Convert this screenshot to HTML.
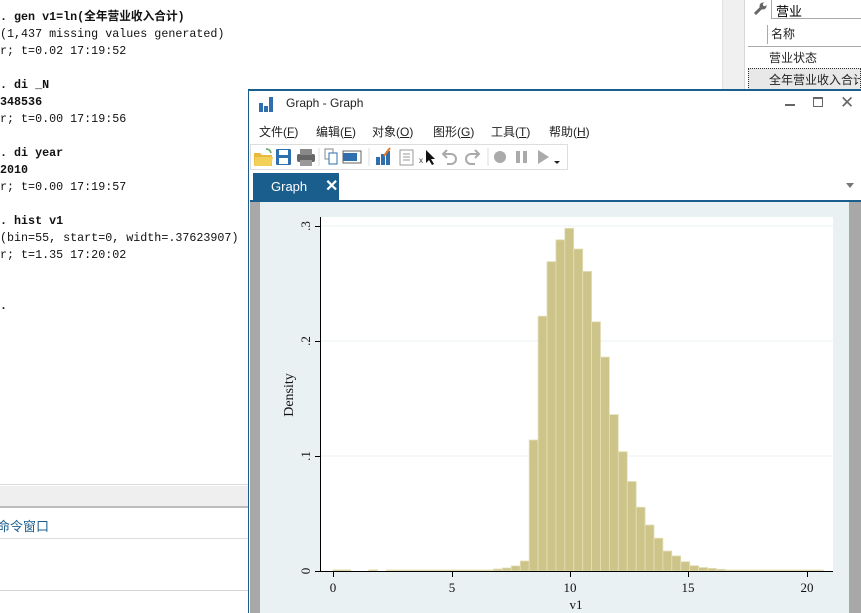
<!DOCTYPE html>
<html><head><meta charset="utf-8"><style>
*{margin:0;padding:0;box-sizing:border-box}
body{width:861px;height:613px;overflow:hidden;background:#fff;position:relative;font-family:"Liberation Sans","Noto Sans CJK SC",sans-serif}
.abs{position:absolute}
#con{left:0;top:9px;font-family:"Liberation Mono","Noto Sans CJK SC",monospace;font-size:11.7px;line-height:17px;font-weight:bold;color:#111;white-space:pre}
#con .n{font-weight:normal}
.ui{font-family:"Liberation Sans","Noto Sans CJK SC",sans-serif;font-size:12px;color:#222}
</style></head><body>
<div id="con" class="abs">. gen v1=ln(全年营业收入合计)
<span class="n">(1,437 missing values generated)
r; t=0.02 17:19:52</span>

. di _N
348536
<span class="n">r; t=0.00 17:19:56</span>

. di year
2010
<span class="n">r; t=0.00 17:19:57</span>

. hist v1
<span class="n">(bin=55, start=0, width=.37623907)
r; t=1.35 17:20:02</span>


.</div>
<!-- bottom left -->
<div class="abs" style="left:0;top:484px;width:248px;height:1px;background:#dcdcdc"></div>
<div class="abs" style="left:0;top:486px;width:248px;height:20px;background:#efefef"></div>
<div class="abs" style="left:0;top:506px;width:248px;height:2px;background:#bdbdbd"></div>
<div class="abs ui" style="left:-3px;top:516px;color:#1a5e8e;font-size:13px">命令窗口</div>
<div class="abs" style="left:0;top:538px;width:248px;height:1px;background:#dcdcdc"></div>
<div class="abs" style="left:0;top:590px;width:248px;height:1px;background:#d4d4d4"></div>
<!-- right strip -->
<div class="abs" style="left:722px;top:0;width:23px;height:90px;background:#f0f0f0;border-left:1px solid #e2e2e2;border-right:1px solid #d8d8d8"></div>
<div class="abs" style="left:745px;top:0;width:116px;height:90px;background:#fff"></div>
<svg class="abs" style="left:752px;top:1px" width="16" height="16" viewBox="0 0 16 16"><path d="M3 13 L10 6" stroke="#666" stroke-width="3"/><circle cx="11" cy="5" r="3.5" fill="#666"/><circle cx="12.5" cy="3.5" r="1.6" fill="#fff"/></svg>
<div class="abs ui" style="left:771px;top:0;width:92px;height:19px;border:1px solid #aaa;border-top:none;padding:1px 4px;font-size:13px;color:#000">营业</div>
<div class="abs" style="left:767px;top:25px;width:1px;height:19px;background:#aaa"></div>
<div class="abs ui" style="left:771px;top:25px;font-size:12px">名称</div>
<div class="abs" style="left:748px;top:46px;width:113px;height:1px;background:#aaa"></div>
<div class="abs ui" style="left:769px;top:49px">营业状态</div>
<div class="abs ui" style="left:748px;top:68px;width:113px;height:22px;background:#e8e8e8;border:1px dotted #333;padding:2px 0 0 20px;white-space:nowrap;overflow:hidden">全年营业收入合计</div>
<!-- graph window -->
<div class="abs" style="left:248px;top:89px;width:613px;height:524px;background:#fff;border-left:1px solid #1a5e8e;border-top:2px solid #1a5e8e"></div>
<svg class="abs" style="left:258px;top:96px" width="16" height="16" viewBox="0 0 16 16"><rect x="1" y="7" width="4" height="9" fill="#2f6fad"/><rect x="6" y="10" width="4" height="6" fill="#2f6fad"/><rect x="11" y="1" width="4" height="15" fill="#2f6fad"/></svg>
<div class="abs ui" style="left:286px;top:96px;font-size:12px;color:#222">Graph - Graph</div>
<div class="abs" style="left:785px;top:104px;width:10px;height:2px;background:#666"></div>
<div class="abs" style="left:813px;top:97px;width:10px;height:10px;border:1px solid #666;border-top-width:2px"></div>
<div class="abs ui" style="left:840px;top:93px;font-size:17px;color:#666">✕</div>
<div class="abs ui" style="left:259px;top:123px;word-spacing:0;white-space:nowrap">
<span style="position:absolute;left:0">文件(<u>F</u>)</span><span style="position:absolute;left:57px">编辑(<u>E</u>)</span><span style="position:absolute;left:113px">对象(<u>O</u>)</span><span style="position:absolute;left:174px">图形(<u>G</u>)</span><span style="position:absolute;left:232px">工具(<u>T</u>)</span><span style="position:absolute;left:290px">帮助(<u>H</u>)</span></div>
<div class="abs" style="left:250px;top:144px;width:318px;height:26px;border:1px solid #ddd"></div>
<svg class="abs" style="left:252px;top:146px" width="316" height="22" viewBox="0 0 316 22">
<path d="M2 7h6l2 2h10v11H2z" fill="#e8b93c"/><path d="M3 11h18l-2 9H2z" fill="#f3d057"/><path d="M14 3 q4 0 5 4" stroke="#5aa85a" stroke-width="1.5" fill="none"/>
<rect x="24" y="3" width="15" height="16" rx="1" fill="#2f6fad"/><rect x="27" y="4" width="9" height="5" fill="#fff"/><rect x="27" y="12" width="9" height="6" fill="#fff"/>
<rect x="45" y="8" width="18" height="8" rx="2" fill="#666"/><rect x="48" y="3" width="12" height="6" fill="#888"/><rect x="48" y="14" width="12" height="6" fill="#999"/>
<line x1="67" y1="2" x2="67" y2="20" stroke="#ddd"/>
<rect x="73" y="3" width="8" height="10" fill="none" stroke="#888"/><rect x="77" y="7" width="8" height="11" fill="#fff" stroke="#2f6fad"/>
<rect x="91" y="7" width="14" height="8" fill="#2f6fad"/><rect x="91" y="5" width="18" height="12" fill="none" stroke="#666"/>
<line x1="117" y1="2" x2="117" y2="20" stroke="#ddd"/>
<rect x="124" y="11" width="4" height="8" fill="#2f6fad"/><rect x="129" y="8" width="4" height="11" fill="#2f6fad"/><rect x="134" y="5" width="4" height="14" fill="#2f6fad"/><path d="M132 10 l6 -8" stroke="#e07a2a" stroke-width="2"/>
<rect x="148" y="4" width="13" height="15" fill="none" stroke="#999"/><path d="M151 8h7M151 11h7M151 14h7" stroke="#999"/>
<text x="167" y="17" font-size="8" fill="#333" font-family="Liberation Sans">x</text><path d="M174 4 v13 l3 -3 l3 5 l2 -1 l-3 -5 h4 z" fill="#111"/>
<path d="M192 8 h7 a5 5 0 0 1 0 10 h-4 M195 4 l-4 4 l4 4" stroke="#aaa" stroke-width="2" fill="none"/>
<path d="M226 8 h-7 a5 5 0 0 0 0 10 h4 M223 4 l4 4 l-4 4" stroke="#aaa" stroke-width="2" fill="none"/>
<line x1="236" y1="2" x2="236" y2="20" stroke="#ddd"/>
<circle cx="248" cy="11" r="6" fill="#aaa"/><rect x="264" y="5" width="4" height="12" fill="#aaa"/><rect x="271" y="5" width="4" height="12" fill="#aaa"/>
<path d="M286 4 l11 7 l-11 7z" fill="#aaa"/><path d="M302 15 h6 l-3 3z" fill="#222"/>
</svg>
<div class="abs ui" style="left:253px;top:173px;width:86px;height:28px;background:#1a5e8e;color:#fff;font-size:13px;padding:6px 0 0 18px">Graph<span style="position:absolute;left:72px;top:3px;font-size:16px;font-weight:bold">✕</span></div>
<div class="abs" style="left:846px;top:183px;width:0;height:0;border-left:4px solid transparent;border-right:4px solid transparent;border-top:5px solid #777"></div>
<div class="abs" style="left:250px;top:200px;width:611px;height:2px;background:#1a5e8e"></div>
<div class="abs" style="left:250px;top:202px;width:10px;height:411px;background:#a8a8a8"></div>
<div class="abs" style="left:849px;top:202px;width:12px;height:411px;background:#a8a8a8"></div>
<svg class="abs" style="left:260px;top:202px" width="589" height="411" viewBox="260 202 589 411">
<rect x="260" y="202" width="589" height="411" fill="#eaf1f3"/>
<rect x="320" y="217" width="513" height="354" fill="#fff"/>
<g stroke="#eaf1f3" stroke-width="1"><line x1="321" y1="226" x2="833" y2="226"/><line x1="321" y1="341" x2="833" y2="341"/><line x1="321" y1="456" x2="833" y2="456"/></g>
<g fill="#cdc489" stroke="#e4dfb8" stroke-width="0.8">
<rect x="333" y="569.8" width="17.8" height="1.2"/><rect x="368.7" y="569.8" width="8.9" height="1.2"/><rect x="386.5" y="570" width="107" height="1"/>
<rect x="493.5" y="569" width="8.9" height="2"/><rect x="502.4" y="568" width="8.9" height="3"/><rect x="511.3" y="565.9" width="8.9" height="5.1"/><rect x="520.3" y="561" width="8.9" height="10"/>
<rect x="529.2" y="440" width="8.9" height="131"/><rect x="538.1" y="316.2" width="8.9" height="254.8"/><rect x="547" y="261.6" width="8.9" height="309.4"/><rect x="555.9" y="239.8" width="8.9" height="331.2"/><rect x="564.8" y="228.3" width="8.9" height="342.7"/><rect x="573.8" y="249" width="8.9" height="322"/><rect x="582.7" y="271.4" width="8.9" height="299.6"/><rect x="591.6" y="321.8" width="8.9" height="249.2"/><rect x="600.5" y="357.1" width="8.9" height="213.9"/><rect x="609.4" y="414.6" width="8.9" height="156.4"/><rect x="618.3" y="451.7" width="8.9" height="119.3"/><rect x="627.3" y="481.5" width="8.9" height="89.5"/><rect x="636.2" y="507.2" width="8.9" height="63.8"/><rect x="645.1" y="525" width="8.9" height="46"/><rect x="654" y="538.2" width="8.9" height="32.8"/><rect x="662.9" y="551" width="8.9" height="20"/><rect x="671.8" y="555.9" width="8.9" height="15.1"/><rect x="680.8" y="561.7" width="8.9" height="9.3"/><rect x="689.7" y="565.7" width="8.9" height="5.3"/><rect x="698.6" y="567.5" width="8.9" height="3.5"/><rect x="707.5" y="568.4" width="8.9" height="2.6"/><rect x="716.4" y="569.3" width="8.9" height="1.7"/><rect x="725.3" y="570" width="98" height="1"/>
</g>
<g stroke="#000" stroke-width="1" fill="none">
<line x1="320.5" y1="217" x2="320.5" y2="571"/><line x1="320" y1="571.5" x2="833" y2="571.5"/>
<path d="M315 226.5h5M315 341.5h5M315 456.5h5M315 571.5h5"/>
<path d="M333.5 572v5M452.5 572v5M570.5 572v5M688.5 572v5M807.5 572v5"/>
</g>
<g font-family="Liberation Serif" font-size="13" fill="#111" text-anchor="middle">
<text x="333" y="592">0</text><text x="452" y="592">5</text><text x="570" y="592">10</text><text x="688" y="592">15</text><text x="807" y="592">20</text>
<text x="576" y="609">v1</text>
<text transform="translate(310,226) rotate(-90)">.3</text><text transform="translate(310,341) rotate(-90)">.2</text><text transform="translate(310,456) rotate(-90)">.1</text><text transform="translate(310,571) rotate(-90)">0</text>
<text transform="translate(293,395) rotate(-90)" font-size="14">Density</text>
</g>
</svg>
</body></html>
